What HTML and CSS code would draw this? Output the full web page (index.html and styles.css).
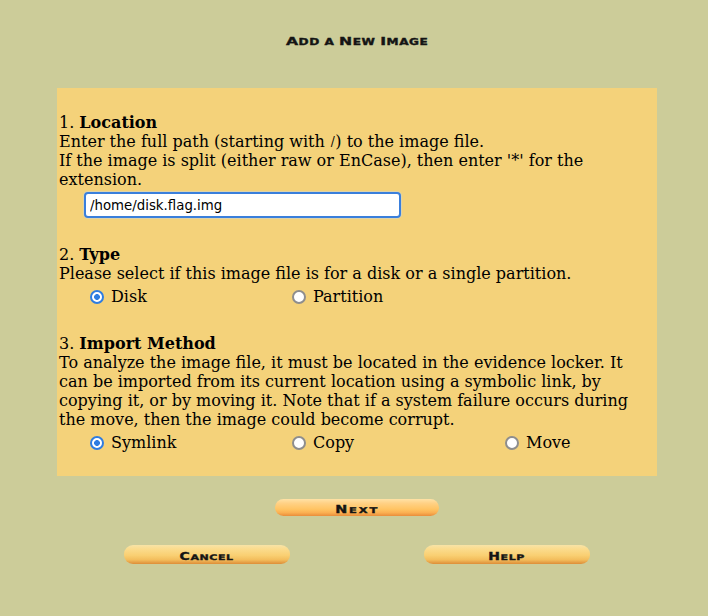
FILE: index.html
```html
<!DOCTYPE html>
<html>
<head>
<meta charset="utf-8">
<title>Add a New Image</title>
<link rel="stylesheet" href="styles.css">
</head>
<body>
<div class="wrap">
  <div class="title"><span class="caps"><span class="big">A</span>DD A <span class="big">N</span>EW <span class="big">I</span>MAGE</span></div>
  <form class="panel">
    <div class="txt"><div>1. <b>Location</b></div>
      <div>Enter the full path (starting with <span class="slash">/</span>) to the image file.</div>
      <div>If the image is split (either raw or EnCase), then enter '*' for the extension.</div>
    </div>
    <input class="path" type="text" value="/home/disk.flag.img">

    <div class="txt sec2"><div>2. <b>Type</b></div>
      <div>Please select if this image file is for a disk or a single partition.</div>
    </div>
    <div class="radios r1">
      <label class="opt w1"><input type="radio" name="type" checked>Disk</label>
      <label class="opt"><input type="radio" name="type">Partition</label>
    </div>

    <div class="txt sec3"><div>3. <b>Import Method</b></div>
      <div>To analyze the image file, it must be located in the evidence locker. It can be imported from its current location using a symbolic link, by copying it, or by moving it. Note that if a system failure occurs during the move, then the image could become corrupt.</div>
    </div>
    <div class="radios r2">
      <label class="opt w1"><input type="radio" name="imp" checked>Symlink</label>
      <label class="opt w2"><input type="radio" name="imp">Copy</label>
      <label class="opt"><input type="radio" name="imp">Move</label>
    </div>
  </form>
</div>
<div class="btn next"><span class="caps sm"><span class="big">N</span>EXT</span></div>
<div class="btnrow">
  <div class="btn pale"><span class="caps sm"><span class="big">C</span>ANCEL</span></div>
  <div class="btn pale"><span class="caps sm"><span class="big">H</span>ELP</span></div>
</div>
</body>
</html>
```
FILE: styles.css
```css
html, body {
  margin: 0;
  padding: 0;
}
body {
  background: #cccc99;
  padding: 8px;
  font-family: "DejaVu Serif", serif;
  font-size: 16px;
  color: #000;
}
.wrap {
  width: 600px;
  margin-left: 49px;
}
.title {
  margin-top: 22px;
  height: 20px;
  line-height: 20px;
  text-align: center;
}
.caps {
  display: inline-block;
  font-family: "DejaVu Sans", sans-serif;
  font-weight: bold;
  font-size: 8.2px;
  letter-spacing: 0.35px;
  transform: scaleX(1.48);
  color: #141414;
  -webkit-text-stroke: 0.35px #141414;
}
.caps .big {
  font-size: 10.6px;
}
.caps.sm {
  font-size: 7.6px;
  letter-spacing: 0.4px;
  transform: scaleX(1.45);
}
.caps.sm .big {
  font-size: 9.6px;
}
.next .caps.sm {
  font-size: 7.9px;
  letter-spacing: 1.3px;
}
.next .caps.sm .big {
  font-size: 9.9px;
}
.panel {
  margin: 38px 0 0 0;
  background: #f4d27a;
  padding: 25px 0 24px 0;
  line-height: 19px;
}
.txt {
  padding: 0 2px;
}
.slash {
  display: inline-block;
  transform: scale(0.75);
}
.path {
  display: block;
  box-sizing: border-box;
  margin: 3px 0 0 27px;
  width: 317px;
  height: 26px;
  border: 2px solid #3a7fdc;
  border-radius: 4px;
  box-shadow: 0 0 0 1px #dcd3ae;
  padding: 0 4px;
  font-family: "DejaVu Sans", sans-serif;
  font-size: 13.33px;
  color: #000;
  background: #fff;
  outline: none;
}
.sec2 { margin-top: 27px; }
.sec3 { margin-top: 28px; }
.radios {
  display: flex;
  padding-left: 33px;
}
.r1 { margin-top: 4px; }
.r2 { margin-top: 4px; }
.opt {
  display: flex;
  align-items: center;
  height: 19px;
}
.opt input {
  -webkit-appearance: none;
  appearance: none;
  box-sizing: border-box;
  margin: 0 7px 0 0;
  width: 14px;
  height: 14px;
  border: 2px solid #8e8e8e;
  border-radius: 50%;
  background: #fff;
}
.opt input:checked {
  border-color: #2f7de1;
  background: radial-gradient(circle, #2f7de1 0, #2f7de1 2.6px, #fff 3.2px);
}
.w1 { width: 202px; }
.w2 { width: 213px; }
.btn {
  box-sizing: border-box;
  height: 19px;
  border-radius: 9px;
  text-align: center;
  line-height: 19px;
  overflow: hidden;
}
.next {
  width: 164px;
  height: 17px;
  line-height: 17px;
  margin: 23px 0 0 267px;
  background: linear-gradient(to bottom, #ffe2a6 0%, #ffd185 25%, #ffc463 60%, #fbb052 80%, #e98d3a 100%);
}
.btnrow {
  display: flex;
  justify-content: space-between;
  width: 466px;
  margin: 29px 0 0 116px;
}
.pale {
  width: 166px;
  background: linear-gradient(to bottom, #f7e3a6 0%, #fbdc8e 20%, #f9cf72 55%, #f3bd5c 78%, #dd8d38 100%);
}
```
